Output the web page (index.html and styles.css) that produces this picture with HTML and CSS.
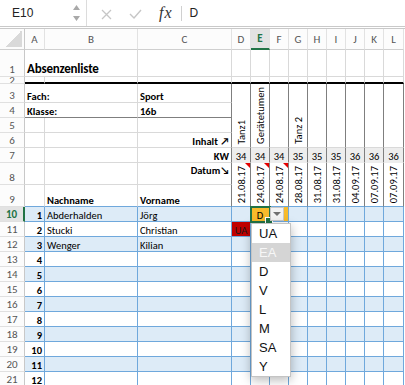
FILE: index.html
```html
<!DOCTYPE html>
<html lang="de">
<head>
    <meta charset="UTF-8">
    <title>Absenzenliste</title>
    <link rel="stylesheet" href="styles.css">
</head>
<body>
    <div class="formula-bar">
        <div class="name-box">
            <span>E10</span>
            <svg class="spinner" width="7" height="16" viewBox="0 0 7 16"><path d="M0 5L3.5 0L7 5Z M0 11L7 11L3.5 16Z" fill="#a9a9a9"/></svg>
        </div>
        <svg class="tool cancel" width="11" height="11" viewBox="0 0 11 11"><path d="M1 1L10 10M10 1L1 10" stroke="#c6c6c6" stroke-width="1.3"/></svg>
        <svg class="tool enter" width="13" height="10" viewBox="0 0 13 10"><path d="M1 5L5 9L12 1" fill="none" stroke="#c6c6c6" stroke-width="1.4"/></svg>
        <span class="fx">fx</span>
        <span class="divider"></span>
        <span class="formula">D</span>
    </div>

    <div class="sheet">
        <!-- column headers -->
        <div class="row">
            <div class="corner"><span></span></div>
            <div class="ch">A</div><div class="ch">B</div><div class="ch">C</div><div class="ch">D</div>
            <div class="ch sel">E</div><div class="ch">F</div><div class="ch">G</div><div class="ch">H</div>
            <div class="ch">I</div><div class="ch">J</div><div class="ch">K</div><div class="ch">L</div>
        </div>

        <div class="row">
            <div class="rh">1</div>
            <div class="c title span2">Absenzenliste</div><div class="c"></div>
            <div class="c"></div><div class="c"></div><div class="c"></div><div class="c"></div><div class="c"></div>
            <div class="c"></div><div class="c"></div><div class="c"></div><div class="c"></div>
        </div>

        <div class="row thick">
            <div class="rh short">2</div>
            <div class="c"></div><div class="c"></div><div class="c"></div>
            <div class="c"></div><div class="c"></div><div class="c"></div><div class="c"></div><div class="c"></div>
            <div class="c"></div><div class="c"></div><div class="c"></div><div class="c"></div>
        </div>

        <div class="row">
            <div class="rh">3</div>
            <div class="c b span2">Fach:</div><div class="c b dk-r">Sport</div>
            <div class="c topic"><span class="rot">Tanz1</span></div>
            <div class="c topic"><span class="rot">Gerätetumen</span></div>
            <div class="c topic"></div>
            <div class="c topic"><span class="rot">Tanz 2</span></div>
            <div class="c topic"></div><div class="c topic"></div><div class="c topic"></div>
            <div class="c topic"></div><div class="c topic"></div>
        </div>

        <div class="row">
            <div class="rh">4</div>
            <div class="c b span2 dk-b">Klasse:</div><div class="c b dk-r dk-b">16b</div>
        </div>

        <div class="row">
            <div class="rh">5</div>
            <div class="c"></div><div class="c"></div><div class="c dk-r"></div>
        </div>

        <div class="row">
            <div class="rh">6</div>
            <div class="c"></div><div class="c"></div><div class="c dk-r b r">Inhalt ↗</div>
        </div>

        <div class="row">
            <div class="rh">7</div>
            <div class="c"></div><div class="c"></div><div class="c dk-r b r">KW</div>
            <div class="c kw">34</div><div class="c kw">34</div><div class="c kw">34</div>
            <div class="c kw">35</div><div class="c kw">35</div><div class="c kw">35</div>
            <div class="c kw">36</div><div class="c kw">36</div><div class="c kw">36</div>
        </div>

        <div class="row">
            <div class="rh">8</div>
            <div class="c"></div><div class="c"></div><div class="c dk-r b r top">Datum↘</div>
            <div class="c date note"><span class="rot">21.08.17</span></div>
            <div class="c date note"><span class="rot">24.08.17</span></div>
            <div class="c date note"><span class="rot">24.08.17</span></div>
            <div class="c date"><span class="rot">28.08.17</span></div>
            <div class="c date"><span class="rot">31.08.17</span></div>
            <div class="c date"><span class="rot">31.08.17</span></div>
            <div class="c date"><span class="rot">04.09.17</span></div>
            <div class="c date"><span class="rot">07.09.17</span></div>
            <div class="c date"><span class="rot">07.09.17</span></div>
        </div>

        <div class="row head">
            <div class="rh">9</div>
            <div class="c"></div><div class="c b">Nachname</div><div class="c b dk-r">Vorname</div>
        </div>

        <!-- student rows -->
        <div class="row body band">
            <div class="rh sel">10</div><div class="c num">1</div><div class="c">Abderhalden</div><div class="c">Jörg</div>
            <div class="c"></div><div class="c pick active">D</div><div class="c pick"></div>
            <div class="c"></div><div class="c"></div><div class="c"></div><div class="c"></div><div class="c"></div><div class="c"></div>
        </div>
        <div class="row body">
            <div class="rh">11</div><div class="c num">2</div><div class="c">Stucki</div><div class="c">Christian</div>
            <div class="c absent">UA</div><div class="c"></div><div class="c"></div>
            <div class="c"></div><div class="c"></div><div class="c"></div><div class="c"></div><div class="c"></div><div class="c"></div>
        </div>
        <div class="row body band">
            <div class="rh">12</div><div class="c num">3</div><div class="c">Wenger</div><div class="c">Kilian</div>
            <div class="c"></div><div class="c"></div><div class="c"></div>
            <div class="c"></div><div class="c"></div><div class="c"></div><div class="c"></div><div class="c"></div><div class="c"></div>
        </div>
        <div class="row body">
            <div class="rh">13</div><div class="c num">4</div><div class="c"></div><div class="c"></div>
            <div class="c"></div><div class="c"></div><div class="c"></div>
            <div class="c"></div><div class="c"></div><div class="c"></div><div class="c"></div><div class="c"></div><div class="c"></div>
        </div>
        <div class="row body band">
            <div class="rh">14</div><div class="c num">5</div><div class="c"></div><div class="c"></div>
            <div class="c"></div><div class="c"></div><div class="c"></div>
            <div class="c"></div><div class="c"></div><div class="c"></div><div class="c"></div><div class="c"></div><div class="c"></div>
        </div>
        <div class="row body">
            <div class="rh">15</div><div class="c num">6</div><div class="c"></div><div class="c"></div>
            <div class="c"></div><div class="c"></div><div class="c"></div>
            <div class="c"></div><div class="c"></div><div class="c"></div><div class="c"></div><div class="c"></div><div class="c"></div>
        </div>
        <div class="row body band">
            <div class="rh">16</div><div class="c num">7</div><div class="c"></div><div class="c"></div>
            <div class="c"></div><div class="c"></div><div class="c"></div>
            <div class="c"></div><div class="c"></div><div class="c"></div><div class="c"></div><div class="c"></div><div class="c"></div>
        </div>
        <div class="row body">
            <div class="rh">17</div><div class="c num">8</div><div class="c"></div><div class="c"></div>
            <div class="c"></div><div class="c"></div><div class="c"></div>
            <div class="c"></div><div class="c"></div><div class="c"></div><div class="c"></div><div class="c"></div><div class="c"></div>
        </div>
        <div class="row body band">
            <div class="rh">18</div><div class="c num">9</div><div class="c"></div><div class="c"></div>
            <div class="c"></div><div class="c"></div><div class="c"></div>
            <div class="c"></div><div class="c"></div><div class="c"></div><div class="c"></div><div class="c"></div><div class="c"></div>
        </div>
        <div class="row body">
            <div class="rh">19</div><div class="c num">10</div><div class="c"></div><div class="c"></div>
            <div class="c"></div><div class="c"></div><div class="c"></div>
            <div class="c"></div><div class="c"></div><div class="c"></div><div class="c"></div><div class="c"></div><div class="c"></div>
        </div>
        <div class="row body band">
            <div class="rh">20</div><div class="c num">11</div><div class="c"></div><div class="c"></div>
            <div class="c"></div><div class="c"></div><div class="c"></div>
            <div class="c"></div><div class="c"></div><div class="c"></div><div class="c"></div><div class="c"></div><div class="c"></div>
        </div>
        <div class="row body">
            <div class="rh">21</div><div class="c num">12</div><div class="c"></div><div class="c"></div>
            <div class="c"></div><div class="c"></div><div class="c"></div>
            <div class="c"></div><div class="c"></div><div class="c"></div><div class="c"></div><div class="c"></div><div class="c"></div>
        </div>

        <!-- data validation list for E10 -->
        <div class="dd-btn"></div>
        <ul class="dropdown">
            <li>UA</li>
            <li class="hover">EA</li>
            <li>D</li>
            <li>V</li>
            <li>L</li>
            <li>M</li>
            <li>SA</li>
            <li>Y</li>
        </ul>
    </div>
</body>
</html>
```

FILE: styles.css
```css
* {
    box-sizing: border-box;
}
body {
    margin: 0;
    width: 405px;
    height: 385px;
    overflow: hidden;
    background: #fff;
    font-family: Carlito, Lato, sans-serif;
    font-size: 10.5px;
    color: #000;
}

/* formula bar */
.formula-bar {
    display: flex;
    align-items: center;
    height: 29px;
    border-bottom: 3px double #c9c9c9;
    font-family: "Liberation Sans", Arial, sans-serif;
    font-size: 12px;
    color: #222;
}
.name-box {
    display: flex;
    align-items: center;
    justify-content: space-between;
    width: 87px;
    height: 100%;
    padding: 0 6px 0 12px;
    border-right: 1px solid #dcdcdc;
}
.tool {
    margin-top: 2px;
}
.cancel {
    margin-left: 14px;
}
.enter {
    margin-left: 17px;
}
.fx {
    margin-left: 17px;
    font-family: "Liberation Serif", serif;
    font-style: italic;
    font-size: 16px;
    letter-spacing: 1px;
    color: #333;
}
.divider {
    width: 1px;
    height: 15px;
    margin-left: 8px;
    background: #d0d0d0;
}
.formula {
    margin-left: 8px;
}

/* sheet grid */
.sheet {
    position: relative;
    display: grid;
    grid-template-columns: 25px 20px 93px 94px repeat(8, 19px) 20px;
    grid-template-rows: 21px 27px 7px 19px 15px 15px 15px 15px 22px 22px repeat(12, 15px);
}
.row {
    display: contents;
}
.corner {
    display: flex;
    align-items: flex-end;
    justify-content: flex-end;
    padding: 0 2px 2px 0;
    background: #fcfcfc;
    border-right: 1px solid #c8c8c8;
    border-bottom: 1px solid #cfcfcf;
}
.corner span {
    width: 17px;
    height: 17px;
    background: linear-gradient(to top left, #d9d9d9 50%, transparent 50%);
}
.ch {
    display: flex;
    align-items: center;
    justify-content: center;
    font-size: 11px;
    color: #555;
    background: #fcfcfc;
    border-right: 1px solid #e2e2e2;
    border-bottom: 1px solid #cfcfcf;
}
.rh {
    display: flex;
    align-items: flex-end;
    justify-content: center;
    overflow: hidden;
    font-size: 11px;
    line-height: 11px;
    padding-bottom: 1px;
    color: #555;
    background: #fcfcfc;
    border-right: 1px solid #c8c8c8;
    border-bottom: 1px solid #e0e0e0;
}
.rh.short {
    line-height: 5px;
    padding-bottom: 0;
}
.ch.sel, .rh.sel {
    background: #e3e3e3;
    color: #217346;
    font-weight: bold;
}
.ch.sel {
    border-bottom: 2px solid #217346;
}
.rh.sel {
    border-right: 2px solid #217346;
}

.c {
    display: flex;
    align-items: flex-end;
    min-width: 0;
    padding: 0 2px;
    line-height: 11px;
    white-space: nowrap;
    overflow: hidden;
    border-right: 1px solid #d9d9d9;
    border-bottom: 1px solid #d9d9d9;
}
.span2 {
    grid-column: span 2;
}
.b {
    font-weight: bold;
}
.r {
    justify-content: flex-end;
}
.top {
    align-items: flex-start;
    padding-top: 2px;
}
.title {
    font-size: 13px;
    font-weight: bold;
    letter-spacing: -0.2px;
    line-height: 14px;
}
.thick .c {
    border-bottom: 2px solid #000;
}
.dk-r {
    border-right-color: #7f7f7f;
}
.dk-b {
    border-bottom-color: #7f7f7f;
}
.rot {
    writing-mode: vertical-rl;
    transform: rotate(180deg);
}
.topic {
    grid-row: span 4;
    justify-content: center;
    padding-bottom: 3px;
    border-right-color: #7f7f7f;
}
.kw {
    justify-content: center;
    background: #ededed;
    border-right-color: #7f7f7f;
    border-bottom-color: #ededed;
}
.date {
    position: relative;
    grid-row: span 2;
    justify-content: center;
    padding-bottom: 3px;
    border-right-color: #7f7f7f;
    border-bottom-color: #6fa8dc;
}
.note::after {
    content: "";
    position: absolute;
    top: 0;
    right: 0;
    border-top: 5px solid #e30000;
    border-left: 5px solid transparent;
}

/* table part */
.head .c {
    border-bottom-color: #6fa8dc;
}
.body .c {
    border-color: #6fa8dc;
}
.band .c {
    background: #ddebf7;
}
.num {
    justify-content: flex-end;
    font-weight: bold;
}
.band .pick {
    justify-content: center;
    background: #f8bb2b;
}
.active {
    position: relative;
    overflow: visible;
    outline: 2px solid #217346;
    outline-offset: -1px;
    z-index: 1;
}
.active::after {
    content: "";
    position: absolute;
    right: -4px;
    bottom: -4px;
    width: 6px;
    height: 6px;
    background: #217346;
    border: 1px solid #fff;
}
.body .absent {
    justify-content: center;
    background: #c00000;
    color: #1a1a1a;
}

/* validation dropdown */
.dd-btn {
    position: absolute;
    left: 270px;
    top: 178px;
    width: 14px;
    height: 14px;
    background: #f3f3f3;
    border: 1px solid #c9c9c9;
    z-index: 2;
}
.dd-btn::after {
    content: "";
    position: absolute;
    left: 2px;
    top: 4px;
    border-top: 4px solid #707070;
    border-left: 4px solid transparent;
    border-right: 4px solid transparent;
}
.dropdown {
    position: absolute;
    left: 251px;
    top: 194px;
    width: 40px;
    margin: 0;
    padding: 0;
    list-style: none;
    background: #fff;
    border: 1px solid #c4c4c4;
    box-shadow: 0 3px 10px rgba(0, 0, 0, 0.28);
    font-family: "Liberation Sans", Arial, sans-serif;
    font-size: 13px;
    color: #111;
    z-index: 3;
}
.dropdown li {
    height: 19px;
    line-height: 19px;
    padding-left: 7px;
}
.dropdown .hover {
    background: #d5d5d5;
    color: #f7f7f7;
}
```
